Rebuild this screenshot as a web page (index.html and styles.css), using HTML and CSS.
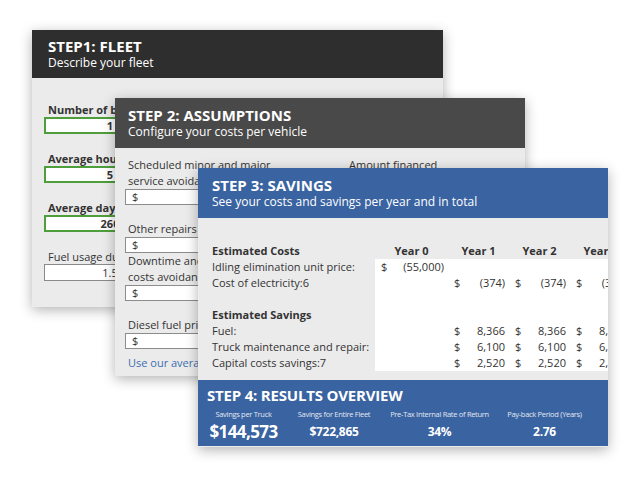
FILE: index.html
```html
<!DOCTYPE html>
<html lang="en">
<head>
    <meta charset="UTF-8">
    <meta name="viewport" content="width=device-width, initial-scale=1.0">
    <title>Idling Savings Calculator</title>
    <link rel="stylesheet" href="styles.css">
</head>
<body>
    <div class="stage">
        <!-- step 1 -->
        <section class="card card-fleet">
            <header class="card-head head-black">
                <h2>STEP1: FLEET</h2>
                <p>Describe your fleet</p>
            </header>
            <div class="fleet-body">
                <div class="fleet-field">
                    <label class="bold">Number of box trucks in fleet</label>
                    <div class="fleet-box green">1</div>
                </div>
                <div class="fleet-field">
                    <label class="bold">Average hours idling per day</label>
                    <div class="fleet-box green">5</div>
                </div>
                <div class="fleet-field">
                    <label class="bold">Average days operated per year</label>
                    <div class="fleet-box green">260</div>
                </div>
                <div class="fleet-field">
                    <label>Fuel usage during idling (gal/hr)</label>
                    <div class="fleet-box">1.5</div>
                </div>
            </div>
        </section>

        <!-- step 2 -->
        <section class="card card-assume">
            <header class="card-head head-grey">
                <h2>STEP 2: ASSUMPTIONS</h2>
                <p>Configure your costs per vehicle</p>
            </header>
            <div class="assume-body">
                <div class="assume-col">
                    <div class="field">
                        <label>Scheduled minor and major service avoidance</label>
                        <div class="money">$</div>
                    </div>
                    <div class="field tight">
                        <label>Other repairs</label>
                        <div class="money">$</div>
                    </div>
                    <div class="field">
                        <label>Downtime and lost revenue costs avoidance</label>
                        <div class="money">$</div>
                    </div>
                    <div class="field">
                        <label>Diesel fuel price</label>
                        <div class="money">$</div>
                    </div>
                    <a class="link" href="#">Use our average values</a>
                </div>
                <div class="assume-col">
                    <div class="field">
                        <label>Amount financed</label>
                        <div class="money">$</div>
                    </div>
                </div>
            </div>
        </section>

        <!-- step 3 + step 4 -->
        <section class="card card-savings">
            <header class="card-head head-blue">
                <h2>STEP 3: SAVINGS</h2>
                <p>See your costs and savings per year and in total</p>
            </header>
            <div class="savings-body">
                <div class="table">
                    <div class="th left">Estimated Costs</div>
                    <div class="th">Year 0</div>
                    <div class="th">Year 1</div>
                    <div class="th">Year 2</div>
                    <div class="th">Year 3</div>

                    <div class="td">Idling elimination unit price:</div>
                    <div class="num"><span>$</span><span>(55,000)</span></div>
                    <div class="num"></div>
                    <div class="num"></div>
                    <div class="num"></div>

                    <div class="td">Cost of electricity:6</div>
                    <div class="num"></div>
                    <div class="num"><span>$</span><span>(374)</span></div>
                    <div class="num"><span>$</span><span>(374)</span></div>
                    <div class="num"><span>$</span><span>(374)</span></div>

                    <div class="td blank"></div>
                    <div class="num blank"></div>
                    <div class="num blank"></div>
                    <div class="num blank"></div>
                    <div class="num blank"></div>

                    <div class="th left">Estimated Savings</div>
                    <div class="num"></div>
                    <div class="num"></div>
                    <div class="num"></div>
                    <div class="num"></div>

                    <div class="td">Fuel:</div>
                    <div class="num"></div>
                    <div class="num"><span>$</span><span>8,366</span></div>
                    <div class="num"><span>$</span><span>8,366</span></div>
                    <div class="num"><span>$</span><span>8,366</span></div>

                    <div class="td">Truck maintenance and repair:</div>
                    <div class="num"></div>
                    <div class="num"><span>$</span><span>6,100</span></div>
                    <div class="num"><span>$</span><span>6,100</span></div>
                    <div class="num"><span>$</span><span>6,100</span></div>

                    <div class="td">Capital costs savings:7</div>
                    <div class="num"></div>
                    <div class="num"><span>$</span><span>2,520</span></div>
                    <div class="num"><span>$</span><span>2,520</span></div>
                    <div class="num"><span>$</span><span>2,520</span></div>
                </div>
            </div>
            <div class="results">
                <h2>STEP 4: RESULTS OVERVIEW</h2>
                <div class="results-grid">
                    <div class="res-label">Savings per Truck</div>
                    <div class="res-label">Savings for Entire Fleet</div>
                    <div class="res-label">Pre-Tax Internal Rate of Return</div>
                    <div class="res-label">Pay-back Period (Years)</div>
                    <div class="res-value big">$144,573</div>
                    <div class="res-value">$722,865</div>
                    <div class="res-value">34%</div>
                    <div class="res-value">2.76</div>
                </div>
            </div>
        </section>
    </div>
</body>
</html>
```

FILE: styles.css
```css
*{
    margin: 0;
    padding: 0;
    box-sizing: border-box;
}
body{
    background: #fff;
    font-family: "Open Sans", "Liberation Sans", sans-serif;
    color: #333;
}
.stage{
    width: 640px;
    height: 480px;
    position: relative;
    overflow: hidden;
}
/* the three screens lie over each other like windows */
.card{
    position: absolute;
    width: 410px;
    background: #ebebeb;
    box-shadow: 0 3px 12px rgba(0, 0, 0, 0.3);
    overflow: hidden;
}
.card-fleet{
    left: 32px;
    top: 30px;
    width: 411px;
    height: 277px;
}
.card-assume{
    left: 115px;
    top: 98px;
    height: 278px;
}
.card-savings{
    left: 198px;
    top: 168px;
    height: 279px;
}
.card-head{
    color: #fff;
    padding: 8px 14px;
}
.card-head h2{
    font-size: 15px;
    line-height: 18px;
    font-weight: 700;
}
.card-head p{
    font-size: 12px;
    line-height: 16px;
}
.head-black{
    background: #2e2e2e;
    padding: 7px 16px;
}
.head-grey{
    background: #494949;
    padding-left: 13px;
}
.head-blue{
    background: #3a63a1;
}

/* step 1 */
.fleet-body{
    padding: 24px 0 0 12px;
    font-size: 11px;
}
.fleet-field{
    margin-bottom: 17px;
}
.fleet-field label{
    display: block;
    line-height: 15px;
    padding-left: 4px;
    white-space: nowrap;
}
.fleet-field .bold{
    font-weight: 700;
}
.fleet-box{
    width: 132px;
    height: 17px;
    background: #fff;
    border: 1px solid #8a8a8a;
    text-align: center;
    line-height: 15px;
}
.fleet-box.green{
    border: 2px solid #4f9e3c;
    line-height: 13px;
    font-weight: 700;
}

/* step 2 */
.assume-body{
    display: grid;
    grid-template-columns: 156px 156px;
    column-gap: 65px;
    padding: 9px 0 0 10px;
    font-size: 11px;
}
.field{
    margin-bottom: 16px;
}
.field.tight{
    margin-bottom: 0;
}
.field label{
    display: block;
    line-height: 16px;
    padding-left: 3px;
}
.money{
    height: 16px;
    background: #fff;
    border: 1px solid #8c8c8c;
    padding-left: 6px;
    line-height: 14px;
}
.link{
    display: block;
    margin-top: -10px;
    padding-left: 3px;
    line-height: 16px;
    color: #3b6eae;
    text-decoration: none;
    white-space: nowrap;
}

/* step 3 */
.savings-body{
    padding: 25px 0 9px 14px;
    font-size: 11px;
}
.table{
    display: grid;
    grid-template-columns: 163px 73px 61px 61px 61px;
    grid-auto-rows: 16px;
    line-height: 16px;
}
.th{
    font-weight: 700;
    text-align: center;
}
.th.left{
    text-align: left;
}
.td{
    white-space: nowrap;
}
.blank{
    height: 17px;
}
.num{
    display: flex;
    justify-content: space-between;
    padding: 0 4px 0 6px;
    background: #fff;
    white-space: nowrap;
}

/* step 4 */
.results{
    background: #3a63a1;
    color: #fff;
    height: 66px;
    padding: 6px 9px 3px;
}
.results h2{
    font-size: 15px;
    line-height: 18px;
    letter-spacing: -0.2px;
    margin-bottom: 5px;
}
.results-grid{
    display: grid;
    grid-template-columns: 73px 108px 103px 107px;
    text-align: center;
    white-space: nowrap;
}
.res-label{
    font-size: 7.5px;
    line-height: 10px;
    letter-spacing: -0.3px;
    color: #e2e8f2;
}
.res-value{
    margin-top: 2px;
    font-size: 12px;
    line-height: 22px;
    font-weight: 700;
    letter-spacing: -0.3px;
}
.res-value.big{
    font-size: 17px;
    letter-spacing: -0.6px;
}
```
